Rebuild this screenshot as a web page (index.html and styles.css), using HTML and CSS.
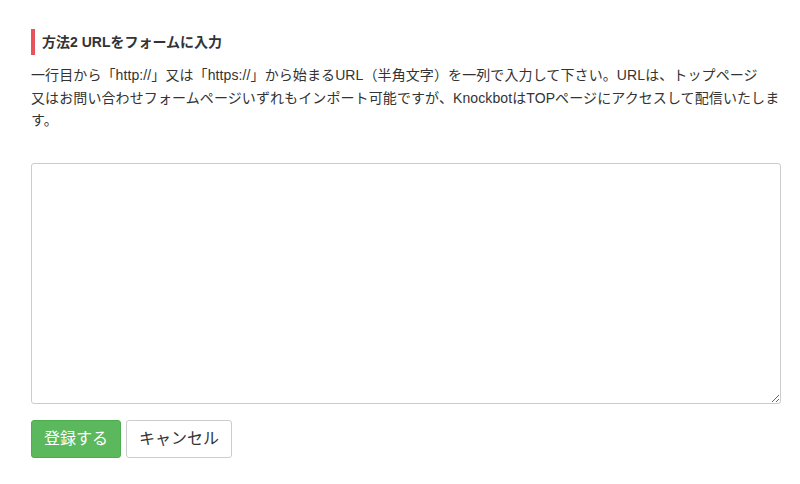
FILE: index.html
```html
<!DOCTYPE html>
<html lang="ja">
<head>
  <meta charset="UTF-8" />
  <meta name="viewport" content="width=device-width, initial-scale=1.0"/>
  <title>URLインポート</title>
  <link rel="stylesheet" href="styles.css">
</head>
<body>
  <div class="container">
    <h3 class="section-title">方法2 URLをフォームに入力</h3>
    <p class="description">一行目から「http://」又は「https://」から始まるURL（半角文字）を一列で入力して下さい。URLは、トップページ<br>又はお問い合わせフォームページいずれもインポート可能ですが、KnockbotはTOPページにアクセスして配信いたします。</p>
    <textarea class="url-input"></textarea>
    <div class="actions">
      <button class="btn btn-success">登録する</button>
      <button class="btn btn-default">キャンセル</button>
    </div>
  </div>
</body>
</html>
```

FILE: styles.css
```css
body {
  margin: 0;
  background: #fff;
  color: #333;
  font-family: "Liberation Sans", "Noto Sans CJK JP", sans-serif;
}

.container {
  width: 750px;
  margin-left: 31px;
  padding-top: 29px;
}

.section-title {
  margin: 0;
  border-left: 4px solid #e8525a;
  padding-left: 7px;
  font-size: 14px;
  font-weight: bold;
  line-height: 26px;
  color: #333;
}

.description {
  margin: 9px 0 0;
  font-size: 14px;
  line-height: 22.5px;
  letter-spacing: 0.1px;
  color: #333;
}

.url-input {
  display: block;
  box-sizing: border-box;
  width: 750px;
  height: 241px;
  margin-top: 31px;
  border: 1px solid #ccc;
  border-radius: 3px;
  padding: 6px 12px;
  font-family: inherit;
  font-size: 14px;
}

.actions {
  display: flex;
  gap: 5px;
  margin-top: 16px;
}

.btn {
  font-family: inherit;
  font-size: 16px;
  line-height: 24px;
  padding: 6px 12px;
  border-radius: 3px;
  border: 1px solid transparent;
  cursor: pointer;
}

.btn-success {
  background: #5cb85c;
  border-color: #4cae4c;
  color: #fff;
}

.btn-default {
  background: #fff;
  border-color: #ccc;
  color: #333;
}
```
